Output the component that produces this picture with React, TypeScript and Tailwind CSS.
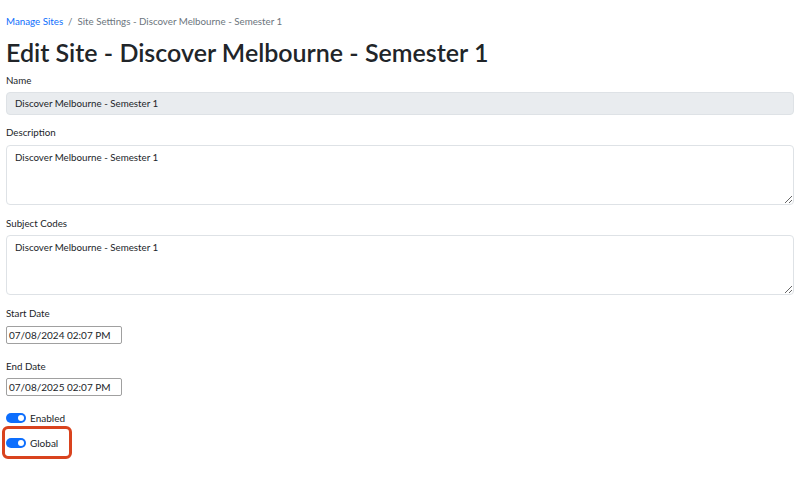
import React from "react";

const font = { fontFamily: '"Segoe UI", Lato, "Noto Sans", sans-serif' };

const Toggle = ({ label }: { label: string }) => (
	<div className="flex items-center gap-[4px] h-[14px]">
		<span className="relative w-[20px] h-[10px] rounded-full bg-[#0d6efd]">
			<span className="absolute right-[2px] top-[2px] w-[6px] h-[6px] rounded-full bg-white" />
		</span>
		<span className="text-[10px] leading-[14px] text-[#212529]">{label}</span>
	</div>
);

const Label = ({ children, className = "" }: { children: React.ReactNode; className?: string }) => (
	<div className={`text-[9.75px] leading-[14px] ${className}`}>{children}</div>
);

export default function App() {
	return (
		<div className="w-[800px] h-[478px] bg-white px-[6px] pt-[14px] text-[#212529]" style={font}>
			{/* Breadcrumb */}
			<div className="flex items-center text-[9.75px] leading-[14px]">
				<a className="text-[#0d6efd]">Manage Sites</a>
				<span className="px-[5px] text-[#6c757d]">/</span>
				<span className="text-[#6c757d]">Site Settings - Discover Melbourne - Semester 1</span>
			</div>

			<h1 className="mt-[9px] text-[25px] leading-[30px] font-semibold">
				Edit Site - Discover Melbourne - Semester 1
			</h1>

			<Label className="mt-[6px]">Name</Label>
			<div className="mt-[5px] h-[23px] rounded-[4px] border border-[#dee2e6] bg-[#e9ecef] px-[8px] text-[9.75px] leading-[21px]">
				Discover Melbourne - Semester 1
			</div>

			<Label className="mt-[10px]">Description</Label>
			<textarea
				className="mt-[6px] block w-full h-[60px] rounded-[4px] border border-[#dee2e6] px-[8px] py-[4px] text-[9.75px] leading-[14px] outline-none"
				defaultValue="Discover Melbourne - Semester 1"
				style={font}
			/>

			<Label className="mt-[11px]">Subject Codes</Label>
			<textarea
				className="mt-[5px] block w-full h-[60px] rounded-[4px] border border-[#dee2e6] px-[8px] py-[4px] text-[9.75px] leading-[14px] outline-none"
				defaultValue="Discover Melbourne - Semester 1"
				style={font}
			/>

			<Label className="mt-[11px]">Start Date</Label>
			<div className="mt-[6px] w-[116px] h-[18px] border border-[#a0a0a0] rounded-[2px] px-[2px] text-[10px] leading-[16px] whitespace-nowrap">
				07/08/2024 02:07 PM
			</div>

			<Label className="mt-[15px]">End Date</Label>
			<div className="mt-[5px] w-[116px] h-[18px] border border-[#a0a0a0] rounded-[2px] px-[2px] text-[10px] leading-[16px] whitespace-nowrap">
				07/08/2025 02:07 PM
			</div>

			<div className="mt-[15px] flex flex-col gap-[11px]">
				<Toggle label="Enabled" />
				<div className="relative">
					<Toggle label="Global" />
					<div className="absolute left-[-4px] top-[-10px] w-[70px] h-[33px] rounded-[6px] border-[3px] border-[#d9431e]" />
				</div>
			</div>
		</div>
	);
}
